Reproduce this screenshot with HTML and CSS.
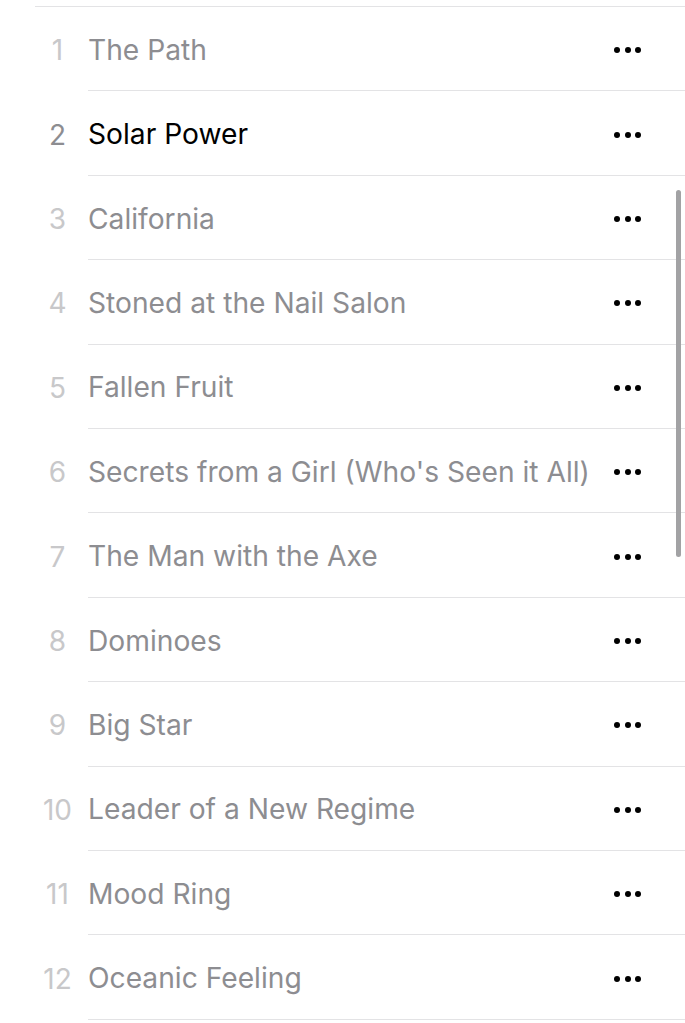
FILE: index.html
```html
<!DOCTYPE html>
<html lang="en">
<head>
  <meta charset="UTF-8">
  <title>Solar Power</title>
  <link rel="stylesheet" href="styles.css">
</head>
<body>

<div class="tracklist">
  <div class="top-rule"></div>

  <ul class="tracks">
    <li class="track"><span class="num">1</span><div class="track-body"><span class="title">The Path</span><button class="more"><i></i><i></i><i></i></button></div></li>
    <li class="track playing"><span class="num">2</span><div class="track-body"><span class="title">Solar Power</span><button class="more"><i></i><i></i><i></i></button></div></li>
    <li class="track"><span class="num">3</span><div class="track-body"><span class="title">California</span><button class="more"><i></i><i></i><i></i></button></div></li>
    <li class="track"><span class="num">4</span><div class="track-body"><span class="title">Stoned at the Nail Salon</span><button class="more"><i></i><i></i><i></i></button></div></li>
    <li class="track"><span class="num">5</span><div class="track-body"><span class="title">Fallen Fruit</span><button class="more"><i></i><i></i><i></i></button></div></li>
    <li class="track"><span class="num">6</span><div class="track-body"><span class="title">Secrets from a Girl (Who's Seen it All)</span><button class="more"><i></i><i></i><i></i></button></div></li>
    <li class="track"><span class="num">7</span><div class="track-body"><span class="title">The Man with the Axe</span><button class="more"><i></i><i></i><i></i></button></div></li>
    <li class="track"><span class="num">8</span><div class="track-body"><span class="title">Dominoes</span><button class="more"><i></i><i></i><i></i></button></div></li>
    <li class="track"><span class="num">9</span><div class="track-body"><span class="title">Big Star</span><button class="more"><i></i><i></i><i></i></button></div></li>
    <li class="track"><span class="num">10</span><div class="track-body"><span class="title">Leader of a New Regime</span><button class="more"><i></i><i></i><i></i></button></div></li>
    <li class="track"><span class="num">11</span><div class="track-body"><span class="title">Mood Ring</span><button class="more"><i></i><i></i><i></i></button></div></li>
    <li class="track"><span class="num">12</span><div class="track-body"><span class="title">Oceanic Feeling</span><button class="more"><i></i><i></i><i></i></button></div></li>
  </ul>

  <div class="scrollbar"></div>
</div>

</body>
</html>
```

FILE: styles.css
```css
body {
  margin: 0;
  background: #fff;
  font-family: Inter, 'Noto Sans', sans-serif;
  overflow: hidden;
}

.tracklist {
  position: relative;
  padding-top: 6px;
}

.top-rule {
  margin-left: 35px;
  height: 1px;
  background: #e3e3e5;
}

.tracks {
  list-style: none;
  margin: 0;
  padding: 0;
}

.track {
  display: flex;
  align-items: stretch;
  height: 84.42px;
}

.num {
  width: 45px;
  margin-left: 35px;
  margin-right: 8px;
  padding-top: 2px;
  align-self: center;
  text-align: center;
  font-size: 28px;
  color: #c8c8ca;
}

.track-body {
  flex: 1;
  display: flex;
  align-items: center;
  border-bottom: 1px solid #e3e3e5;
}

.title {
  flex: 1;
  padding-top: 2px;
  font-size: 28.2px;
  color: #8d8d91;
  white-space: nowrap;
}

.playing .num {
  color: #8d8d91;
}

.playing .title {
  color: #000;
}

.more {
  display: flex;
  gap: 4.5px;
  padding: 0;
  margin-top: 3px;
  margin-right: 44px;
  background: none;
  border: none;
}

.more i {
  width: 6px;
  height: 6px;
  border-radius: 50%;
  background: #000;
}

.scrollbar {
  position: absolute;
  top: 190px;
  right: 4px;
  width: 5px;
  height: 367px;
  border-radius: 3px;
  background: #a2a2a4;
}
```
